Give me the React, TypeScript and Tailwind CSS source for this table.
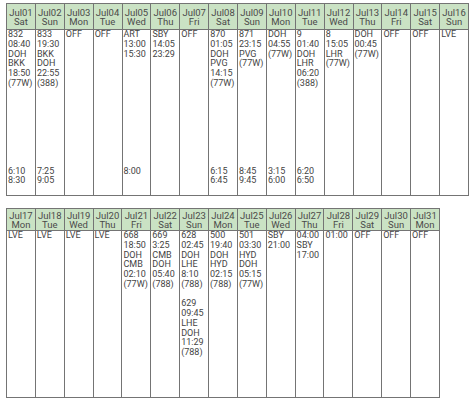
import React from 'react';

type Day = { date: string; dow: string; lines: string[] };

// blank line placeholder so the tail times land on the right row
const B = '';

const pad = (lines: string[], tail: string[], at = 14) => {
  const out = [...lines];
  while (out.length < at) out.push(B);
  return [...out, ...tail];
};

const july1: Day[] = [
  { date: 'Jul01', dow: 'Sat', lines: pad(['832', '08:40', 'DOH', 'BKK', '18:50', '(77W)'], ['6:10', '8:30']) },
  { date: 'Jul02', dow: 'Sun', lines: pad(['833', '19:30', 'BKK', 'DOH', '22:55', '(388)'], ['7:25', '9:05']) },
  { date: 'Jul03', dow: 'Mon', lines: ['OFF'] },
  { date: 'Jul04', dow: 'Tue', lines: ['OFF'] },
  { date: 'Jul05', dow: 'Wed', lines: pad(['ART', '13:00', '15:30'], ['8:00']) },
  { date: 'Jul06', dow: 'Thu', lines: ['SBY', '14:05', '23:29'] },
  { date: 'Jul07', dow: 'Fri', lines: ['OFF'] },
  { date: 'Jul08', dow: 'Sat', lines: pad(['870', '01:05', 'DOH', 'PVG', '14:15', '(77W)'], ['6:15', '6:45']) },
  { date: 'Jul09', dow: 'Sun', lines: pad(['871', '23:15', 'PVG', '(77W)'], ['8:45', '9:45']) },
  { date: 'Jul10', dow: 'Mon', lines: pad(['DOH', '04:55', '(77W)'], ['3:15', '6:00']) },
  { date: 'Jul11', dow: 'Tue', lines: pad(['9', '01:40', 'DOH', 'LHR', '06:20', '(388)'], ['6:20', '6:50']) },
  { date: 'Jul12', dow: 'Wed', lines: ['8', '15:05', 'LHR', '(77W)'] },
  { date: 'Jul13', dow: 'Thu', lines: ['DOH', '00:45', '(77W)'] },
  { date: 'Jul14', dow: 'Fri', lines: ['OFF'] },
  { date: 'Jul15', dow: 'Sat', lines: ['OFF'] },
  { date: 'Jul16', dow: 'Sun', lines: ['LVE'] },
];

const july2: Day[] = [
  { date: 'Jul17', dow: 'Mon', lines: ['LVE'] },
  { date: 'Jul18', dow: 'Tue', lines: ['LVE'] },
  { date: 'Jul19', dow: 'Wed', lines: ['LVE'] },
  { date: 'Jul20', dow: 'Thu', lines: ['LVE'] },
  { date: 'Jul21', dow: 'Fri', lines: ['668', '18:50', 'DOH', 'CMB', '02:10', '(77W)'] },
  { date: 'Jul22', dow: 'Sat', lines: ['669', '3:25', 'CMB', 'DOH', '05:40', '(788)'] },
  {
    date: 'Jul23',
    dow: 'Sun',
    lines: ['628', '02:45', 'DOH', 'LHE', '8:10', '(788)', B, '629', '09:45', 'LHE', 'DOH', '11:29', '(788)'],
  },
  { date: 'Jul24', dow: 'Mon', lines: ['500', '19:40', 'DOH', 'HYD', '02:15', '(788)'] },
  { date: 'Jul25', dow: 'Tue', lines: ['501', '03:30', 'HYD', 'DOH', '05:15', '(77W)'] },
  { date: 'Jul26', dow: 'Wed', lines: ['SBY', '21:00'] },
  { date: 'Jul27', dow: 'Thu', lines: ['04:00', 'SBY', '17:00'] },
  { date: 'Jul28', dow: 'Fri', lines: ['01:00'] },
  { date: 'Jul29', dow: 'Sat', lines: ['OFF'] },
  { date: 'Jul30', dow: 'Sun', lines: ['OFF'] },
  { date: 'Jul31', dow: 'Mon', lines: ['OFF'] },
];

function Roster({ days, width, headH, bodyH }: { days: Day[]; width: string; headH: string; bodyH: string }) {
  return (
    <table className={`table-fixed border-collapse ${width}`}>
      <thead>
        <tr className={headH}>
          {days.map((d) => (
            <th
              key={d.date}
              className="border border-[#747474] bg-[#cae2c4] p-0 pt-px text-center align-middle text-[9.5px] font-normal leading-[9.5px] text-[#4a4a4a]"
            >
              <div>{d.date}</div>
              <div>{d.dow}</div>
            </th>
          ))}
        </tr>
      </thead>
      <tbody>
        <tr className={bodyH}>
          {days.map((d) => (
            <td
              key={d.date}
              className="border border-[#747474] p-0 pl-px align-top text-[9px] leading-[9.77px] text-[#444444]"
            >
              {d.lines.map((l, i) => (
                <div key={i} className="h-[9.77px] whitespace-nowrap">
                  {l || '\u00a0'}
                </div>
              ))}
            </td>
          ))}
        </tr>
      </tbody>
    </table>
  );
}

export default function App() {
  return (
    <div
      className="flex h-[405px] w-[474px] flex-col gap-[12px] bg-white pl-[6px] pt-[3px]"
      style={{ fontFamily: 'Roboto, "Liberation Sans", sans-serif' }}
    >
      <Roster days={july1} width="w-[463px]" headH="h-[26px]" bodyH="h-[166px]" />
      <Roster days={july2} width="w-[434px]" headH="h-[22px]" bodyH="h-[167px]" />
    </div>
  );
}
